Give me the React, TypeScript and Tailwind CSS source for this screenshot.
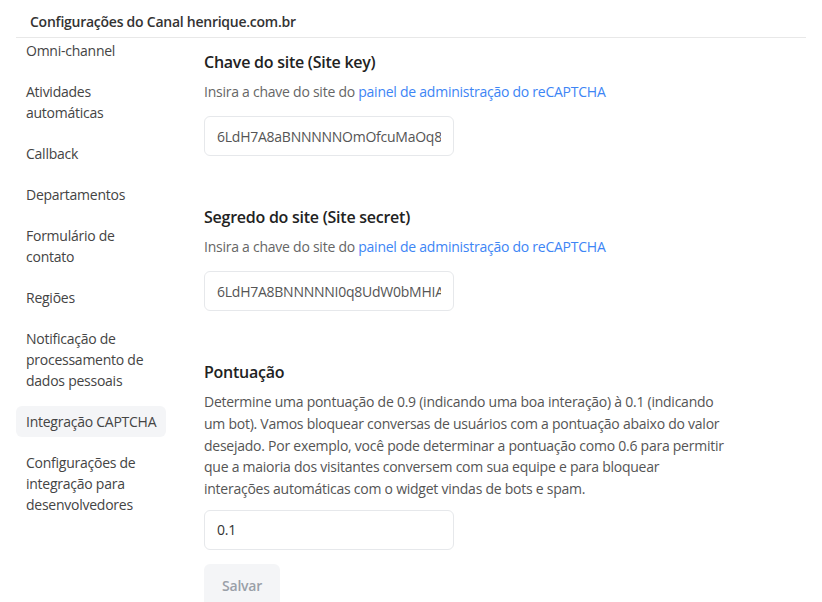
import React from "react";

const menu = [
  ["Omni-channel"],
  ["Atividades", "automáticas"],
  ["Callback"],
  ["Departamentos"],
  ["Formulário de", "contato"],
  ["Regiões"],
  ["Notificação de", "processamento de", "dados pessoais"],
  ["Integração CAPTCHA"],
  ["Configurações de", "integração para", "desenvolvedores"],
];

const ACTIVE = "Integração CAPTCHA";

function KeyField({
  title,
  value,
  className = "",
}: {
  title: string;
  value: string;
  className?: string;
}) {
  return (
    <section className={className}>
      <h3 className="text-[16px] leading-[24px] font-semibold text-[#222]">{title}</h3>
      <p className="mt-[7px] whitespace-nowrap text-[14px] leading-[21px] text-[#666]">
        Insira a chave do site do{" "}
        <a className="text-[#3d85f5]" href="#">
          painel de administração do reCAPTCHA
        </a>
      </p>
      <input
        readOnly
        value={value}
        className="mt-[14px] block h-10 w-[250px] rounded-md border border-[#e6e8eb] px-[12px] text-[14px] tracking-[-0.25px] text-[#555] outline-none"
      />
    </section>
  );
}

export default function App() {
  return (
    <div
      className="h-[602px] w-[822px] overflow-hidden bg-white tracking-[-0.25px]"
      style={{ fontFamily: '"Open Sans", "Noto Sans", sans-serif' }}
    >
      <div className="mx-4 border-b border-[#e8e8e8] pl-[14px] pt-[11px] pb-[5px]">
        <h1 className="text-[14px] leading-[21px] font-semibold text-[#333]">
          Configurações do Canal henrique.com.br
        </h1>
      </div>

      <div className="flex">
        {/* Menu lateral */}
        <nav className="ml-4 -mt-[3px] flex w-[150px] shrink-0 flex-col gap-[10px]">
          {menu.map((lines) => {
            const label = lines.join(" ");
            return (
              <div
                key={label}
                className={
                  "whitespace-nowrap rounded-md px-[10px] py-[5px] text-[14px] leading-[21px] text-[#444] " +
                  (label === ACTIVE ? "bg-[#f4f5f7]" : "")
                }
              >
                {lines.map((l) => (
                  <div key={l}>{l}</div>
                ))}
              </div>
            );
          })}
        </nav>

        {/* Conteúdo */}
        <main className="ml-[38px] pt-[12px]">
          <KeyField title="Chave do site (Site key)" value="6LdH7A8aBNNNNNOmOfcuMaOq8BxYz" />
          <KeyField
            className="mt-[49px]"
            title="Segredo do site (Site secret)"
            value="6LdH7A8BNNNNNI0q8UdW0bMHIAgkL"
          />

          <section className="mt-[49px]">
            <h3 className="text-[16px] leading-[24px] font-semibold text-[#222]">Pontuação</h3>
            <p className="mt-[7px] whitespace-nowrap text-[14px] leading-[21.75px] text-[#555]">
              Determine uma pontuação de 0.9 (indicando uma boa interação) à 0.1 (indicando
              <br />
              um bot). Vamos bloquear conversas de usuários com a pontuação abaixo do valor
              <br />
              desejado. Por exemplo, você pode determinar a pontuação como 0.6 para permitir
              <br />
              que a maioria dos visitantes conversem com sua equipe e para bloquear
              <br />
              interações automáticas com o widget vindas de bots e spam.
            </p>
            <input
              readOnly
              value="0.1"
              className="mt-[10px] block h-10 w-[250px] rounded-md border border-[#e6e8eb] px-[12px] text-[14px] text-[#333] outline-none"
            />
            <button className="mt-[14px] h-[44px] w-[76px] rounded-md bg-[#f4f5f7] text-[14px] font-semibold text-[#9aa0a8]">
              Salvar
            </button>
          </section>
        </main>
      </div>
    </div>
  );
}
